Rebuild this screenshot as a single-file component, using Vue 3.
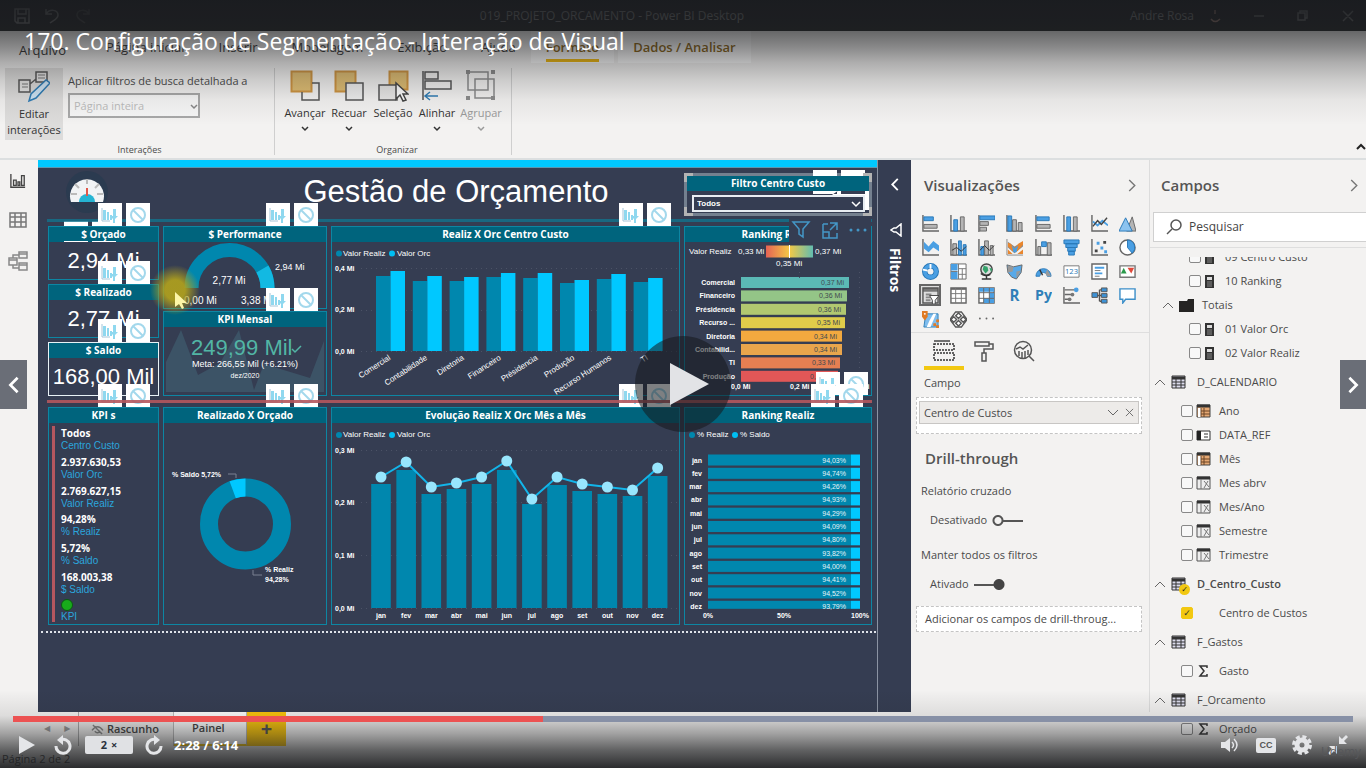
<script setup>
import { ref, computed } from 'vue'

const position = ref(39.55)
const trackStyle = computed(() => ({
  background: `linear-gradient(to right, #ec5252 ${position.value}%, #8790a6 ${position.value}%)`,
}))

const ribbonTabs = ['Página inicial', 'Inserir', 'Modelagem', 'Exibição', 'Ajuda']

const arrange = [
  { label: 'Avançar', art: '<path d="M1.500 1.500h20v20h-20z" fill="#dfbd72" stroke="#cf9440" stroke-width="2"/><path d="M22 13h7v17H12v-8" fill="none" stroke="#555" stroke-width="1.500"/>' },
  { label: 'Recuar', art: '<path d="M1.500 1.500h20v20h-20z" fill="#dfbd72" stroke="#cf9440" stroke-width="2"/><path d="M12 13h17v17H12z" fill="#eee" stroke="#555" stroke-width="1.500"/>' },
  { label: 'Seleção', flat: true, art: '<path d="M11.500 1.500h18v18h-18z" fill="#dfbd72" stroke="#cf9440" stroke-width="2"/><path d="M1 15h18v15H1z" fill="#e8e7e6" stroke="#555" stroke-width="1.500"/><path d="M18 13v16l4-4 3 6 3-1-3-6h5z" fill="#fff" stroke="#444" stroke-width="1.500"/>' },
  { label: 'Alinhar', art: '<path d="M1 1v29M3 2h13v7H3zM3 11h26v8H3z" fill="none" stroke="#555" stroke-width="1.500"/><path d="M4 26h12M8 22l-5 4 5 4" fill="none" stroke="#2f7cb4" stroke-width="1.500"/>' },
  { label: 'Agrupar', off: true, art: '<path d="M2 2h20v18H2zM9 9h19v19H9z" fill="none" stroke="#8c8c8c" stroke-width="1.500"/><path d="M0 0h4v4H0zM25 0h4v4h-4zM0 26h4v4H0zM25 26h4v4h-4z" fill="#8c8c8c"/>' },
]

const totals = [
  { title: '$ Orçado', value: '2,94 Mi' },
  { title: '$ Realizado', value: '2,77 Mi' },
  { title: '$ Saldo', value: '168,00 Mil', active: true },
]

const kpis = [
  ['Todos', 'Centro Custo'],
  ['2.937.630,53', 'Valor Orc'],
  ['2.769.627,15', 'Valor Realiz'],
  ['94,28%', '% Realiz'],
  ['5,72%', '% Saldo'],
  ['168.003,38', '$ Saldo'],
]

const centers = [
  ['Comercial', 276, 271], ['Contabilidade', 281, 276], ['Diretoria', 281, 277], ['Financeiro', 277, 273],
  ['Présidencia', 278, 273], ['Produção', 283, 280], ['Recurso Humanos', 279, 274], ['TI', 282, 278],
].map(([name, real, orc], i) => ({ name, real, orc, x: 376 + i * 36.8 }))

const months = ['jan', 'fev', 'mar', 'abr', 'mai', 'jun', 'jul', 'ago', 'set', 'out', 'nov', 'dez']
const barTops = [484, 470, 494, 489, 484, 470, 504, 485, 491, 494, 496, 476]
const dotTops = [477, 462, 487, 483, 477, 461, 499, 477, 484, 487, 490, 468]
const shares = ['94,03%', '94,74%', '94,26%', '94,93%', '94,29%', '94,09%', '94,80%', '93,82%', '94,00%', '94,41%', '94,52%', '93,79%']
const monthly = months.map((name, i) => ({ name, bar: barTops[i], dot: dotTops[i], cx: 381 + i * 25.15, share: shares[i], y: 454.5 + i * 13.3 }))
const line = monthly.map((m) => `${m.cx},${m.dot}`).join(' ')

const ranking = [
  ['Comercial', '0,37 Mi', 108, '#5bb9b6'], ['Financeiro', '0,36 Mi', 106, '#94c587'],
  ['Présidencia', '0,36 Mi', 105, '#b2c870'], ['Recurso ...', '0,35 Mi', 104, '#e0cc4a'],
  ['Diretoria', '0,34 Mi', 101, '#f2a93f'], ['Contabilid...', '0,34 Mi', 101, '#e9a54c'],
  ['TI', '0,33 Mi', 99, '#e67f52'], ['Produção', '0,33 Mi', 97, '#e25757'],
].map(([name, value, w, color], i) => ({ name, value, w, color, y: 277 + i * 13.4 }))

const ax = '<path d="M1 0v17h17" fill="none" stroke="#666" stroke-width="1.500"/>'
const gr = 'fill="#b5b5b5" stroke="#666"'
const bl = 'fill="#4a9fe3" stroke="#2878b8"'
const vizIcons = [
  ax + `<path d="M2 2h10v4H2z" ${bl}/><path d="M2 10h14v4H2z" ${gr}/>`,
  ax + `<path d="M4 5h4v12H4z" ${bl}/><path d="M11 2h4v15h-4z" ${gr}/>`,
  `<path d="M1 0v18" stroke="#666" stroke-width="1.500"/><path d="M2 1h16v4H2z" ${bl}/><path d="M2 7h9v4H2zM2 13h7v4H2z" ${gr}/>`,
  ax + `<path d="M2 1h4v16H2z" ${bl}/><path d="M7 5h4v12H7zM13 8h4v9h-4z" ${gr}/>`,
  ax + `<path d="M2 2h13v4H2z" ${bl}/><path d="M2 10h14v4H2z" ${gr}/>`,
  ax + `<path d="M4 2h4v15H4z" ${bl}/><path d="M11 2h4v15h-4z" ${gr}/>`,
  ax + '<path d="M2 7l5 4 5-5 6 5" fill="none" stroke="#4a9fe3" stroke-width="2"/><path d="M2 12l5-6 4 4 6-7" fill="none" stroke="#444" stroke-width="1.500"/>',
  `<path d="M8 17l6-15 4 15z" ${gr}/><path d="M0 17L7 3l7 14z" fill="#8cc3ef" stroke="#2878b8"/>`,
  ax + '<path d="M2 3l5 5 5-6 6 5v6l-6-4-5 5-5-4z" fill="#4a9fe3"/>',
  ax + `<path d="M3 5h4v12H3z" ${gr}/><path d="M9 2h3v15H9zM14 6h3v11h-3z" ${bl}/><path d="M2 12l5-3 5 4 5-5" fill="none" stroke="#333"/>`,
  ax + `<path d="M3 8h3v9H3z" ${bl}/><path d="M7 2h4v15H7zM13 7h3v10h-3z" ${gr}/><path d="M2 12l5-5 5 5 5-5" fill="none" stroke="#333"/>`,
  '<path d="M1 0v17h17" fill="none" stroke="#888"/><path d="M2 11l5 5H2zM12 16l6-5v5z" fill="#e8862e"/><path d="M2 3l7 5 9-5v5l-9 7-7-6z" fill="#8b8b8b"/><path d="M2 4l3 1 4 5 4-5 5-3v4l-6 7H7L2 8z" fill="#e8862e"/><path d="M6 7l3 3 4-3-2 7H8z" fill="#4a9fe3"/>',
  ax + `<path d="M3 8h3v9H3zM13 4h4v13h-4z" ${gr}/><path d="M7 3h5v5H7z" ${bl}/>`,
  `<path d="M1 1h16v4H1zM3 5h12v4H3zM5 9h8v4H5zM6 13h6v4H6z" ${bl}/>`,
  ax + '<g fill="#444"><path d="M13 2h3v3h-3zM4 11h3v3H4z"/></g><g fill="#4a9fe3"><path d="M6 3h3v3H6zM10 8h3v3h-3zM14 12h3v3h-3z"/></g>',
  '<circle cx="9" cy="9" r="8" fill="#fff" stroke="#666" stroke-width="1.500"/><path d="M9 1a8 8 0 0 1 5 14L9 9z" fill="#4a9fe3" stroke="#2878b8"/>',
  '<circle cx="9" cy="9" r="6" fill="none" stroke="#2878b8" stroke-width="6"/><circle cx="9" cy="9" r="6" fill="none" stroke="#4a9fe3" stroke-width="4"/><circle cx="9" cy="9" r="3" fill="#f3f2f1"/><path d="M9 1v5M1 7l5 1" stroke="#fff" stroke-width="2"/>',
  '<path d="M1 1h16v16H1z" fill="#fff" stroke="#666"/><path d="M1 1h7v7H1zM1 9h7v8H1z" fill="#4a9fe3"/><path d="M9 1v16M9 6h8M13 6v11M1 9h7M9 12h8" stroke="#777" fill="none"/>',
  '<circle cx="9" cy="7" r="6" fill="#ddd" stroke="#444" stroke-width="1.500"/><path d="M6 3l4 1 1 4-3 3-3-4zM12 5l3 1-1 4z" fill="#34a36b"/><path d="M4 17h10M9 13v4M3 11a8 8 0 0 0 10 1" fill="none" stroke="#333" stroke-width="1.500"/>',
  '<path d="M1 2l7 2 9-2-1 8-5 7-5-2-4-5z" fill="#58a9e8" stroke="#666"/><path d="M2 3l6 1-1 5-5 1zM11 9l5-1-5 8z" fill="#999"/>',
  '<path d="M1 14a8 8 0 0 1 16 0h-4a4 4 0 0 0-8 0z" fill="#4a9fe3" stroke="#2878b8"/><path d="M8 13l-3-6" stroke="#333" stroke-width="1.500"/><path d="M13 7l4 7h-4l-2-3z" fill="#999"/>',
  '<path d="M1 3h16v12H1z" fill="#fff" stroke="#777"/><text x="9" y="12" text-anchor="middle" font-size="8" fill="#2878b8">123</text>',
  '<path d="M1 1h16v16H1z" fill="#fff" stroke="#666" stroke-width="1.500"/><path d="M4 5h10M4 11h8" stroke="#4a9fe3" stroke-width="2"/><path d="M4 8h6M4 14h5" stroke="#777"/>',
  '<path d="M1 3h16v12H1z" fill="#fff" stroke="#777" stroke-width="1.500"/><path d="M2 11l3-6 3 6z" fill="#2a9a4b"/><path d="M9 5h7l-3 6z" fill="#e0493a"/>',
  '<path d="M1 1h16v4H1z" fill="#777"/><path d="M1 1h16v16H1z" fill="none" stroke="#555" stroke-width="1.500"/><path d="M4 8h6M4 11h5M4 14h5" stroke="#888" stroke-width="2"/><path d="M8 9h10l-4 5v4h-3v-4z" fill="#fff" stroke="#444"/>',
  '<path d="M1 1h16v16H1z" fill="#fff" stroke="#666" stroke-width="1.500"/><path d="M1 2h16" stroke="#666" stroke-width="2"/><path d="M6 1v16M12 1v16M1 7h16M1 12h16" stroke="#777"/>',
  '<path d="M1 1h16v16H1z" fill="#fff" stroke="#666" stroke-width="1.500"/><path d="M1 1h16v4H1zM12 6h5v6h-5zM6 12h11v5H6z" fill="#4a9fe3"/><path d="M6 1v16M12 1v16M1 6h16M1 12h16" stroke="#666"/>',
  '<text x="9" y="15" text-anchor="middle" font-size="16" font-weight="700" fill="#2f7fb8">R</text>',
  '<text x="9" y="14" text-anchor="middle" font-size="15" font-weight="700" fill="#2f7fb8">Py</text>',
  '<path d="M1 0v17h17M2 3h10M2 8h7M2 13h4" fill="none" stroke="#666" stroke-width="1.500"/><circle cx="14" cy="3" r="2.500" fill="#4a9fe3"/><circle cx="10" cy="8" r="2" fill="#777"/><circle cx="7" cy="13" r="2" fill="#777"/>',
  '<path d="M6 9h5M9 3v12M9 3h3M9 15h3" stroke="#555" fill="none" stroke-width="1.500"/><path d="M1 6h6v5H1zM11 1h6v4h-6zM11 7h6v4h-6zM11 13h6v4h-6z" fill="#3d92d6" stroke="#555"/>',
  '<path d="M1 2h16v11H7l-3 4v-4H1z" fill="#fff" stroke="#3d8fc9" stroke-width="1.500"/>',
  '<path d="M4 3h13v14H2z" fill="#7fbdee" stroke="#2f7fb8"/><path d="M12 3l3 0-6 14H5l3-7z" fill="#fff"/><path d="M0 0h6v6l-3 4-3-4z" fill="#e07b25"/><circle cx="3" cy="3" r="1" fill="#fff"/><path d="M12 13h3v3h-3zM15 9h3v3h-3zM15 15h3v3h-3z" fill="#e07b25"/>',
  '<path d="M6 1h6l6 8-6 8H6L0 9z" fill="#fff" stroke="#555" stroke-width="1.500"/><path d="M9 2l3 3-3 3-3-3zM4 6l3 3-3 3-3-3zM14 6l3 3-3 3-3-3zM9 10l3 3-3 3-3-3z" fill="#fff" stroke="#555" stroke-width="1.500"/>',
  '<g fill="#666"><circle cx="2" cy="8" r="1"/><circle cx="9" cy="8" r="1"/><circle cx="16" cy="8" r="1"/></g>',
]

const glyphs = {
  calc: '<path d="M3 1h9v13H3z" fill="#333"/><path d="M5 3h5v3H5z" fill="#ddd"/><path d="M5 8h5M5 10h5M5 12h5" stroke="#888"/>',
  folder: '<path d="M0 3h8l1-2h6v13H0z" fill="#252423"/>',
  table: '<path d="M1 1h13v12H1z" fill="#dde" stroke="#333"/><path d="M1 3h13" stroke="#333" stroke-width="3"/><path d="M5 2v11M10 2v11M1 7h13M1 10h13" stroke="#333"/>',
  hier: '<path d="M1 1h13v12H1z" fill="#e5a873" stroke="#444"/><path d="M1 2h13" stroke="#333" stroke-width="3"/><path d="M2 4h3v9H2z" fill="#fff"/><path d="M5 4v9M8 4v9M5 7h9M5 10h9" stroke="#6b4526"/>',
  card: '<path d="M1 3h13v9H1z" fill="#fff" stroke="#333"/><path d="M1 3h4v9H1z" fill="#222"/><path d="M8 6h4M8 9h4" stroke="#333"/>',
  text: '<path d="M1 1h13v12H1z" fill="#eee" stroke="#555"/><path d="M1 2h13" stroke="#333" stroke-width="3"/><path d="M5 3v10M8 5l5 6M12 5l-4 7" stroke="#777"/>',
  sum: '<path d="M11 4V2H4l4 5-4 5h7v-2" fill="none" stroke="#333" stroke-width="1.500"/>',
}
const tree = [
  { k: 'calc', t: '09 Centro Custo', lvl: 'measure' },
  { k: 'calc', t: '10 Ranking', lvl: 'measure' },
  { k: 'folder', t: 'Totais', lvl: 'folder' },
  { k: 'calc', t: '01 Valor Orc', lvl: 'measure' },
  { k: 'calc', t: '02 Valor Realiz', lvl: 'measure' },
  { k: 'table', t: 'D_CALENDARIO', lvl: 'table' },
  { k: 'hier', t: 'Ano', lvl: 'field' },
  { k: 'card', t: 'DATA_REF', lvl: 'field' },
  { k: 'hier', t: 'Mês', lvl: 'field' },
  { k: 'text', t: 'Mes abrv', lvl: 'field' },
  { k: 'text', t: 'Mes/Ano', lvl: 'field' },
  { k: 'text', t: 'Semestre', lvl: 'field' },
  { k: 'text', t: 'Trimestre', lvl: 'field' },
  { k: 'table', t: 'D_Centro_Custo', lvl: 'table', used: true },
  { k: '', t: 'Centro de Custos', lvl: 'field', on: true },
  { k: 'table', t: 'F_Gastos', lvl: 'table' },
  { k: 'sum', t: 'Gasto', lvl: 'field' },
  { k: 'table', t: 'F_Orcamento', lvl: 'table' },
  { k: 'sum', t: 'Orçado', lvl: 'field' },
]

const badgeArt = '<path d="M0 0h24v23H0z" fill="#fff"/><g fill="#8fd8ef"><path d="M5 7h3v10H5zM9 9h2v8H9zM12 12h2v5h-2zM15 6h3v7h-3zM12 13h8l-3 3v4h-2v-4z"/></g><path d="M4 5v13h8" fill="none" stroke="#a5c5d8"/><path d="M28 0h24v23H28z" fill="#fff"/><circle cx="40" cy="12" r="7" fill="none" stroke="#a3d8ec" stroke-width="2"/><path d="M35 7l10 10" stroke="#a3d8ec" stroke-width="2"/>'
</script>

<template>
  <div class="stage">
    <header class="titlebar">
      <svg class="quick" viewBox="0 0 80 16" aria-hidden="true">
        <path d="M1 1h14v14H3l-2-2zM4 1v5h8V1M4 15v-5h7v5M32 1v5h6M32 6c4-6 12-4 12 1 0 4-4 5-8 8" />
        <path class="dim" d="M75 1v5h-6M75 6c-4-6-12-4-12 1 0 4 4 5 8 8" />
      </svg>
      <span class="doc">019_PROJETO_ORCAMENTO - Power BI Desktop</span>
      <span class="user">Andre Rosa</span>
      <svg class="win" viewBox="0 0 160 16" aria-hidden="true">
        <path class="face" d="M9 11q4 5 9 0M13 2v4" />
        <path d="M52 8h10M96 5h7v7h-7zM98 5V3h7v7h-2M141 3l10 10M151 3l-10 10" />
      </svg>
    </header>

    <nav class="tabs" aria-label="Faixa de opções">
      <a href="#" class="file">Arquivo</a>
      <a v-for="t in ribbonTabs" :key="t" href="#">{{ t }}</a>
      <a href="#" class="ctx current">Formato</a>
      <a href="#" class="ctx">Dados / Analisar</a>
    </nav>

    <section class="ribbon">
      <div class="group first">
        <div class="tools">
          <button class="edit">
            <svg viewBox="0 0 32 32" width="32" height="32" aria-hidden="true">
              <path d="M18 1h11v10H18zM1 9h11v12H1zM12 13l6-5" fill="#e4e3e2" stroke="#555" stroke-width="1.500" />
              <path d="M20 4h7M20 7h7M4 13h6M4 16h6" stroke="#777" />
              <path d="M11 30l2-7L28 9l4 3-14 15z" fill="#cfe5f5" stroke="#2f7cb4" stroke-width="1.500" />
            </svg>
            Editar<br>interações
          </button>
          <div class="apply">
            <label for="drill">Aplicar filtros de busca detalhada a</label>
            <span class="pick">
              <select id="drill" disabled><option>Página inteira</option></select>
              <svg viewBox="0 0 8 6" width="8" height="6" aria-hidden="true"><path d="M1 1l3 3 3-3" fill="none" stroke="#888" stroke-width="1.500" /></svg>
            </span>
          </div>
        </div>
        <span class="caption">Interações</span>
      </div>
      <div class="group second">
        <div class="tools">
          <button v-for="a in arrange" :key="a.label" class="tool" :class="{ off: a.off }">
            <svg viewBox="0 0 31 32" width="31" height="32" aria-hidden="true" v-html="a.art" />
            {{ a.label }}
            <svg v-if="!a.flat" class="caret" viewBox="0 0 8 6" width="8" height="6" aria-hidden="true"><path d="M1 1l3 3 3-3" fill="none" stroke="currentColor" stroke-width="1.500" /></svg>
          </button>
        </div>
        <span class="caption">Organizar</span>
      </div>
      <button class="collapse" aria-label="Recolher"><svg viewBox="0 0 10 8" width="10" height="8"><path d="M1 6l4-4 4 4" fill="none" stroke="#222" stroke-width="2" /></svg></button>
    </section>

    <main class="work">
      <nav class="rail" aria-label="Modos">
        <button aria-label="Relatório"><svg viewBox="0 0 18 16" width="16" height="16"><path d="M1 0v15h16M4 7h3v6H4zM9 9h2v4H9zM13 2h3v11h-3z" fill="none" stroke="#444" stroke-width="1.500" /></svg></button>
        <button aria-label="Dados"><svg viewBox="0 0 18 16" width="18" height="16"><path d="M1 1h16v14H1zM1 5h16M1 10h16M6 1v14M12 1v14" fill="none" stroke="#777" stroke-width="1.500" /></svg></button>
        <button aria-label="Modelo"><svg viewBox="0 0 20 20" width="20" height="20"><path d="M1 7h8v7H1zM11 1h8v6h-8zM11 12h8v7h-8zM1 9h8M11 3h8M11 14h8M5 7V4h6M5 14v3h6" fill="none" stroke="#888" stroke-width="1.500" /></svg></button>
      </nav>

      <article class="canvas">
        <div class="strip"></div>
        <div class="head">
          <svg class="logo" viewBox="0 0 44 48" aria-hidden="true">
            <circle cx="22" cy="22" r="21" fill="#2b3b50" />
            <path d="M6 32a17 17 0 1 1 32 0z" fill="#f1f3f5" />
            <path d="M14 32a8 8 0 0 1 16 0z" fill="#25b4d3" />
            <path d="M22 9v5M10 14l4 4M34 14l-4 4M6 24h6M32 24h6" stroke="#bbb" stroke-width="2" />
            <path d="M22 18v8" stroke="#e0574a" stroke-width="2" />
          </svg>
          <h1>Gestão de Orçamento</h1>
          <div class="slicer">
            <svg class="under" viewBox="0 0 60 52" aria-hidden="true"><path d="M4 0h24v24H4zM32 0h24v24H32zM1 40h59V16H36z" fill="#fff" /></svg>
            <label class="bar" for="centro">Filtro Centro Custo</label>
            <span class="choice">
              <select id="centro"><option>Todos</option></select>
              <svg viewBox="0 0 10 8" width="10" height="8" aria-hidden="true"><path d="M1 1l4 4 4-4" fill="none" stroke="#fff" stroke-width="1.500" /></svg>
            </span>
            <i class="grip a"></i><i class="grip b"></i><i class="grip c"></i><i class="grip d"></i>
          </div>
        </div>
        <div class="rule teal"></div>

        <div class="board top">
          <div class="stack">
            <section v-for="c in totals" :key="c.title" class="card" :class="{ active: c.active }">
              <svg class="badges" viewBox="0 0 52 23" aria-hidden="true" v-html="badgeArt" />
              <h2>{{ c.title }}</h2>
              <p class="big">{{ c.value }}</p>
            </section>
            <svg class="traces" viewBox="0 0 52 22" aria-hidden="true"><path d="M0 0h24v5H0zM28 0h24v5H28zM0 20h24v1H0zM28 20h24v1H28z" fill="#fff" /></svg>
          </div>
          <div class="stack tight">
            <section class="card">
              <svg class="badges" viewBox="0 0 52 23" aria-hidden="true" v-html="badgeArt" />
              <h2>$ Performance</h2>
              <svg class="chart" viewBox="164 242 162 66">
                <path d="M191.500 288a38 38 0 0 1 76 0" fill="none" stroke="#0087ae" stroke-width="14" />
                <path d="M262.400 269a38 38 0 0 1 5.100 19" fill="none" stroke="#12b9e2" stroke-width="14" />
                <g fill="#fff" font-size="10">
                  <text x="229" y="284" text-anchor="middle">2,77 Mi</text>
                  <text x="275" y="270" font-size="9">2,94 Mi</text>
                  <text x="184" y="304">0,00 Mi</text>
                  <text x="241" y="304">3,38 Mi</text>
                </g>
              </svg>
            </section>
            <section class="card">
              <svg class="badges" viewBox="0 0 52 23" aria-hidden="true" v-html="badgeArt" />
              <h2>KPI Mensal</h2>
              <svg class="chart" viewBox="164 327 162 68">
                <path d="M166 392v-30l15-32 17 45 22-12 19-33 15 60 10-26 46 14 14-37v51z" fill="#3c5366" />
                <text x="191" y="355" font-size="22" fill="#52b5a5">249,99 Mil</text>
                <path d="M292 349l3 3 6-6" fill="none" stroke="#52b5a5" stroke-width="1.500" />
                <g fill="#fff" text-anchor="middle">
                  <text x="245" y="367" font-size="9">Meta: 266,55 Mil (+6.21%)</text>
                  <text x="245" y="378" font-size="7">dez/2020</text>
                </g>
              </svg>
            </section>
          </div>
          <section class="card">
            <svg class="badges" viewBox="0 0 52 23" aria-hidden="true" v-html="badgeArt" />
            <h2>Realiz X Orc Centro Custo</h2>
            <svg class="chart" viewBox="332 242 347 153">
              <circle cx="339" cy="253.500" r="3" fill="#0087ae" /><circle cx="392" cy="253.500" r="3" fill="#00bff3" />
              <g fill="#fff" font-size="8"><text x="343" y="256">Valor Realiz</text><text x="397" y="256">Valor Orc</text></g>
              <path d="M361 268.500h316M361 310.500h316M361 351.500h316" stroke="#4b5266" stroke-dasharray="1 4" />
              <g fill="#fff" font-size="7" font-weight="700"><text x="335" y="271">0,4 Mi</text><text x="335" y="312">0,2 Mi</text><text x="335" y="354">0,0 Mi</text></g>
              <g v-for="c in centers" :key="c.name">
                <rect :x="c.x" :y="c.real" width="14.500" :height="351 - c.real" fill="#0087ae" />
                <rect :x="c.x + 14.500" :y="c.orc" width="14.500" :height="351 - c.orc" fill="#00c8ff" />
                <text :transform="`translate(${c.x + 15} 359) rotate(-33)`" text-anchor="end" font-size="8" fill="#fff">{{ c.name }}</text>
              </g>
            </svg>
          </section>
          <section class="card">
            <h2 class="rank">Ranking Realiz</h2>
            <svg class="actions" viewBox="0 0 82 24" aria-hidden="true">
              <path d="M0 0h82v24H0z" fill="#353d52" />
              <path d="M4 4h16l-6 7v8l-4-3v-5zM34 6h5M34 6v14h14v-5M41 5h7v7M48 5l-7 7M34 14h6v6" fill="none" stroke="#4496c6" stroke-width="1.500" />
              <g fill="#4496c6"><circle cx="62" cy="12" r="1.500" /><circle cx="69" cy="12" r="1.500" /><circle cx="76" cy="12" r="1.500" /></g>
            </svg>
            <svg class="chart" viewBox="685 242 186 153">
              <defs>
                <linearGradient id="heat"><stop offset="0" stop-color="#e66354" /><stop offset=".5" stop-color="#f3c846" /><stop offset="1" stop-color="#62bdb0" /></linearGradient>
              </defs>
              <rect x="766" y="245.500" width="47" height="12" fill="url(#heat)" /><path d="M789.500 245v13" stroke="#fff" />
              <g fill="#fff" font-size="8"><text x="689" y="254">Valor Realiz</text><text x="738" y="254">0,33 Mi</text><text x="815" y="254">0,37 Mi</text><text x="776" y="266">0,35 Mi</text></g>
              <g v-for="r in ranking" :key="r.name">
                <rect x="741" :y="r.y" :width="r.w" height="11" :fill="r.color" />
                <text x="735" :y="r.y + 8" text-anchor="end" font-size="7" font-weight="700" fill="#fff">{{ r.name }}</text>
                <text :x="736 + r.w" :y="r.y + 8" text-anchor="end" font-size="7" fill="#414a50">{{ r.value }}</text>
              </g>
              <path d="M859.500 272v106M799.500 272v6" stroke="#4b5266" stroke-dasharray="1 4" />
              <g fill="#fff" font-size="7" font-weight="700"><text x="731" y="389">0,0 Mi</text><text x="790" y="389">0,2 Mi</text><text x="850" y="389">0,4 Mi</text></g>
            </svg>
            <svg class="badges low" viewBox="0 0 52 23" aria-hidden="true" v-html="badgeArt" />
          </section>
        </div>

        <div class="rule red"></div>

        <div class="board">
          <section class="card">
            <svg class="badges" viewBox="0 0 52 23" aria-hidden="true" v-html="badgeArt" />
            <h2>KPI s</h2>
            <dl class="kpis">
              <div v-for="k in kpis" :key="k[1]"><dd>{{ k[0] }}</dd><dt>{{ k[1] }}</dt></div>
              <div><dd><i class="lamp"></i></dd><dt>KPI</dt></div>
            </dl>
          </section>
          <section class="card">
            <svg class="badges" viewBox="0 0 52 23" aria-hidden="true" v-html="badgeArt" />
            <h2>Realizado X Orçado</h2>
            <svg class="chart" viewBox="164 423 162 201">
              <circle cx="245.500" cy="524" r="36.500" fill="none" stroke="#0087ae" stroke-width="18" />
              <path d="M232.700 489.800a36.500 36.500 0 0 1 12.800-2.300" fill="none" stroke="#00c8ff" stroke-width="18" />
              <path d="M228 474h8v4M253 570v5h9" fill="none" stroke="#7b8191" />
              <g fill="#fff" font-size="7" font-weight="700"><text x="172" y="477">% Saldo 5,72%</text><text x="265" y="572">% Realiz</text><text x="265" y="582">94,28%</text></g>
            </svg>
          </section>
          <section class="card">
            <svg class="badges" viewBox="0 0 52 23" aria-hidden="true" v-html="badgeArt" />
            <h2>Evolução Realiz X Orc Mês a Mês</h2>
            <svg class="chart" viewBox="332 423 347 201">
              <circle cx="339" cy="435" r="3" fill="#0087ae" /><circle cx="392" cy="435" r="3" fill="#00bff3" />
              <g fill="#fff" font-size="8"><text x="343" y="437">Valor Realiz</text><text x="397" y="437">Valor Orc</text></g>
              <path d="M361 450.500h316M361 502.500h316M361 555.500h316M361 608.500h316" stroke="#4b5266" stroke-dasharray="1 4" />
              <g fill="#fff" font-size="7" font-weight="700"><text x="335" y="453">0,3 Mi</text><text x="335" y="505">0,2 Mi</text><text x="335" y="558">0,1 Mi</text><text x="335" y="611">0,0 Mi</text></g>
              <g v-for="m in monthly" :key="m.name">
                <rect :x="m.cx - 9.800" :y="m.bar" width="19.600" :height="608 - m.bar" fill="#0087ae" />
                <text :x="m.cx" y="618" text-anchor="middle" font-size="7" font-weight="700" fill="#fff">{{ m.name }}</text>
              </g>
              <polyline :points="line" fill="none" stroke="#12b5ea" stroke-width="2" />
              <circle v-for="m in monthly" :key="m.name" :cx="m.cx" :cy="m.dot" r="5.500" fill="#98e6fd" />
            </svg>
          </section>
          <section class="card">
            <svg class="badges" viewBox="0 0 52 23" aria-hidden="true" v-html="badgeArt" />
            <h2>Ranking Realiz</h2>
            <svg class="chart" viewBox="685 423 186 201">
              <circle cx="692" cy="435" r="3" fill="#0087ae" /><circle cx="735" cy="435" r="3" fill="#00bff3" />
              <g fill="#fff" font-size="8"><text x="697" y="437">% Realiz</text><text x="740" y="437">% Saldo</text></g>
              <g v-for="m in monthly" :key="m.name">
                <rect x="708" :y="m.y" width="143" :height="m.name === 'dez' ? 8 : 11" fill="#0087ae" />
                <rect x="851" :y="m.y" width="9" :height="m.name === 'dez' ? 8 : 11" fill="#00c8ff" />
                <text x="702" :y="m.y + 8" text-anchor="end" font-size="7" font-weight="700" fill="#fff">{{ m.name }}</text>
                <text x="846" :y="m.y + 8" text-anchor="end" font-size="7" fill="#e6f4f8">{{ m.share }}</text>
              </g>
              <g fill="#fff" font-size="7" font-weight="700" text-anchor="middle"><text x="708" y="618">0%</text><text x="784" y="618">50%</text><text x="860" y="618">100%</text></g>
            </svg>
          </section>
        </div>
        <div class="dots"></div>
        <svg class="pointer" viewBox="0 0 50 50" aria-hidden="true">
          <defs><radialGradient id="halo"><stop offset=".4" stop-color="#b3a31c" stop-opacity=".9" /><stop offset="1" stop-color="#b3a31c" stop-opacity="0" /></radialGradient></defs>
          <circle cx="25" cy="25" r="25" fill="url(#halo)" />
          <path d="M25 27v15l4-3 3 5 2-1-2-5h5z" fill="#fdf6a8" />
        </svg>
      </article>

      <aside class="filters">
        <button aria-label="Expandir"><svg viewBox="0 0 8 14" width="8" height="13"><path d="M7 1L1 7l6 6" fill="none" stroke="#fff" stroke-width="2" /></svg></button>
        <svg viewBox="0 0 12 14" width="12" height="14" aria-hidden="true"><path d="M11 1v12L6 9H4L1 7l3-2h2z" fill="none" stroke="#fff" stroke-width="1.500" /></svg>
        <h2>Filtros</h2>
      </aside>

      <aside class="viz">
        <header class="panehead"><h2>Visualizações</h2><button aria-label="Recolher"><svg viewBox="0 0 8 14" width="8" height="13"><path d="M1 1l6 6-6 6" fill="none" stroke="#777" stroke-width="1.500" /></svg></button></header>
        <div class="gallery">
          <button v-for="(v, i) in vizIcons" :key="i" :class="{ chosen: i === 24 }" :aria-label="`Visual ${i + 1}`"><svg viewBox="0 0 18 18" width="17" height="17" v-html="v" /></button>
        </div>
        <div class="modes">
          <button class="on" aria-label="Campos"><svg viewBox="0 0 22 22" width="22" height="22"><path d="M1 1h16" stroke="#444" stroke-width="1.500" /><path d="M1 4h20v6H1zM1 13h20v7H1z" fill="none" stroke="#333" stroke-width="1.500" stroke-dasharray="2 1" /></svg></button>
          <button aria-label="Formato"><svg viewBox="0 0 22 22" width="22" height="22"><path d="M2 2h14v4H2zM16 4h4v5h-9v4M9 13h4v8H9z" fill="none" stroke="#555" stroke-width="1.500" /></svg></button>
          <button aria-label="Análise"><svg viewBox="0 0 22 22" width="22" height="22"><circle cx="10" cy="10" r="8.500" fill="none" stroke="#555" stroke-width="1.500" /><path d="M3 9l4-2 3 2 5-4M6 11v5M9 12v6M12 11v7M15 10v5M16 16l5 5" fill="none" stroke="#555" stroke-width="1.500" /></svg></button>
        </div>
        <p class="lbl">Campo</p>
        <div class="well">
          <div class="chip">Centro de Custos
            <span><button aria-label="Opções"><svg viewBox="0 0 12 8" width="12" height="8"><path d="M1 1l5 5 5-5" fill="none" stroke="#666" /></svg></button>
              <button aria-label="Remover"><svg viewBox="0 0 10 10" width="9" height="9"><path d="M1 1l8 8M9 1L1 9" fill="none" stroke="#666" /></svg></button></span>
          </div>
        </div>
        <h3>Drill-through</h3>
        <p class="opt">Relatório cruzado</p>
        <label class="switch">Desativado <input type="checkbox"></label>
        <p class="opt">Manter todos os filtros</p>
        <label class="switch">Ativado <input type="checkbox" checked></label>
        <div class="well drop">Adicionar os campos de drill-throug...</div>
      </aside>

      <aside class="fields">
        <header class="panehead"><h2>Campos</h2><button aria-label="Recolher"><svg viewBox="0 0 8 14" width="8" height="13"><path d="M1 1l6 6-6 6" fill="none" stroke="#777" stroke-width="1.500" /></svg></button></header>
        <div class="search">
          <svg viewBox="0 0 16 16" width="16" height="16" aria-hidden="true"><circle cx="10" cy="6" r="5" fill="none" stroke="#555" stroke-width="1.500" /><path d="M6 10l-5 5" stroke="#555" stroke-width="1.500" /></svg>
          <input type="text" placeholder="Pesquisar" aria-label="Pesquisar">
        </div>
        <div class="scroller">
          <ul>
            <li v-for="n in tree" :key="n.t" :class="n.lvl">
              <svg v-if="n.lvl === 'table' || n.lvl === 'folder'" class="fold" viewBox="0 0 12 8" width="12" height="8" aria-hidden="true"><path d="M1 7l5-5 5 5" fill="none" stroke="#666" /></svg>
              <label>
                <input v-if="n.lvl === 'measure' || n.lvl === 'field'" type="checkbox" :checked="n.on">
                <svg class="kind" viewBox="0 0 15 15" width="15" height="15" aria-hidden="true"><g v-html="glyphs[n.k] || ''" /></svg>
                <i v-if="n.used" class="tick">✓</i>
                <span :class="{ strong: n.used }">{{ n.t }}</span>
              </label>
            </li>
          </ul>
        </div>
      </aside>
    </main>

    <footer class="sheets">
      <div class="row">
        <span class="arrows"><i>◀</i><i>▶</i></span>
        <a href="#"><svg viewBox="0 0 14 12" width="13" height="11" aria-hidden="true"><path d="M1 7q6-8 12 0M2 1l10 10M4 8q3 3 6 0" fill="none" stroke="#888" stroke-width="1.500" /></svg>Rascunho</a>
        <a href="#" class="current">Painel</a>
        <button aria-label="Nova página">+</button>
      </div>
      <span class="status">Página 2 de 2</span>
    </footer>

    <div class="shade up"></div>
    <div class="shade down"></div>
    <p class="lecture">170. Configuração de Segmentação - Interação de Visual</p>
    <button class="jump prev" aria-label="Anterior"><svg viewBox="0 0 12 20" width="12" height="18"><path d="M10 2L2 10l8 8" fill="none" stroke="#fff" stroke-width="3" /></svg></button>
    <button class="jump next" aria-label="Próxima"><svg viewBox="0 0 12 20" width="12" height="18"><path d="M2 2l8 8-8 8" fill="none" stroke="#fff" stroke-width="3" /></svg></button>
    <button class="play" aria-label="Reproduzir"><svg viewBox="0 0 96 96"><path d="M35 27v42l39-21z" fill="#e2e3e6" /></svg></button>

    <div class="player">
      <input v-model="position" class="seek" :style="trackStyle" type="range" min="0" max="100" step="any" aria-label="Progresso">
      <div class="controls">
        <button aria-label="Reproduzir"><svg viewBox="0 0 18 20" width="18" height="20"><path d="M1 1v18l16-9z" fill="#e4e5e8" /></svg></button>
        <button aria-label="Voltar"><svg viewBox="0 0 18 20" width="18" height="20"><path d="M6 5a7 7 0 1 1-4 6" fill="none" stroke="#e4e5e8" stroke-width="3" /><path d="M9 0v10L3 5z" fill="#e4e5e8" /></svg></button>
        <button class="speed">2 <small>×</small></button>
        <button aria-label="Avançar"><svg viewBox="0 0 18 20" width="18" height="20"><path d="M12 5a7 7 0 1 0 4 6" fill="none" stroke="#e4e5e8" stroke-width="3" /><path d="M9 0v10l6-5z" fill="#e4e5e8" /></svg></button>
        <span class="time">2:28 / 6:14</span>
        <span class="brand">Udemy</span>
        <button aria-label="Volume"><svg viewBox="0 0 20 18" width="20" height="18"><path d="M1 6h4l5-4v14l-5-4H1z" fill="#e4e5e8" /><path d="M12 6q3 3 0 6M14 3q6 6 0 12" fill="none" stroke="#e4e5e8" stroke-width="1.500" /></svg></button>
        <button class="cc" aria-label="Legendas">CC</button>
        <button aria-label="Configurações"><svg viewBox="0 0 20 20" width="20" height="20"><circle cx="10" cy="10" r="5" fill="none" stroke="#e4e5e8" stroke-width="5" /><circle cx="10" cy="10" r="8.500" fill="none" stroke="#e4e5e8" stroke-width="3" stroke-dasharray="4 2.700" /></svg></button>
        <button aria-label="Sair da tela cheia"><svg viewBox="0 0 20 20" width="20" height="20"><path d="M11 1v8h8l-3-3 4-4-2-2-4 4zM9 19v-8H1l3 3-4 4 2 2 4-4z" fill="#e4e5e8" /></svg></button>
      </div>
    </div>
  </div>
</template>

<style>
body { background: #f3f2f1; }
</style>

<style scoped>
.stage { position: relative; display: flex; flex-direction: column; min-height: 100vh; overflow: hidden; background: #f3f2f1; color: #4a4a4a; font: 11px/16px "Open Sans", "Noto Sans", sans-serif; }
.stage * { box-sizing: border-box; }
h1, h2, h3, p, ul, dl, dd, dt { margin: 0; padding: 0; }
button { border: 0; padding: 0; background: none; font: inherit; color: inherit; }
a { color: inherit; text-decoration: none; }
svg { flex: none; }

.titlebar { display: flex; align-items: center; height: 31px; padding: 0 4px 0 14px; background: #262626; color: #b4b4b4; font-size: 12px; }
.titlebar svg { height: 16px; fill: none; stroke: #909090; stroke-width: 1.5px; }
.titlebar .quick { width: 80px; }
.titlebar .dim { stroke: #505050; }
.titlebar .face { stroke: #d8a898; }
.titlebar .win { width: 160px; margin-left: 8px; }
.doc { flex: 1; text-align: center; }

.tabs { display: flex; align-items: flex-start; height: 32px; padding-left: 19px; font-size: 13px; line-height: 32px; white-space: nowrap; }
.tabs a { margin-right: 34px; color: #333; }
.tabs .file { padding-top: 3px; margin-right: 40px; }
.tabs .ctx { margin: 0 4px 0 0; padding: 0 15px; background: #fdfdfd; color: #8a6414; font-weight: 600; }
.tabs .current { position: relative; margin-left: -19px; }
.tabs .current::after { content: ""; position: absolute; left: 15px; right: 15px; bottom: 1px; height: 3px; background: #f2b90c; }

.ribbon { display: flex; height: 97px; border-bottom: 2px solid #dcdfe0; }
.group { display: flex; flex-direction: column; justify-content: space-between; margin: 5px 0 3px; border-right: 1px solid #cfcfcf; }
.group.first { padding-left: 5px; width: 275px; }
.group.second { padding-left: 8px; width: 237px; }
.tools { display: flex; align-items: flex-start; height: 73px; }
.caption { font-size: 9px; line-height: 10px; text-align: center; }
.edit { width: 58px; height: 72px; background: #dddcdb; text-align: center; color: #333; }
.edit svg { display: block; margin: 0 auto 3px; }
.apply { margin-left: 5px; padding-top: 5px; }
.apply label { display: block; white-space: nowrap; }
.pick, .choice { position: relative; display: block; }
.pick { width: 132px; margin-top: 4px; }
.pick select { display: block; width: 100%; height: 25px; padding: 0 4px; border: 2px solid #a8a8a8; background: #f6f6f6; color: #bcbcbc; opacity: 1; font: inherit; appearance: none; }
.pick svg { position: absolute; right: 2px; top: 11px; }
.tool { display: flex; flex-direction: column; align-items: center; width: 44px; color: #333; }
.tool svg { margin: 2px 0 3px; }
.tool .caret { margin: 5px 0 0; }
.tool.off { color: #9a9a9a; }
.collapse { margin: auto 0 5px auto; width: 10px; height: 14px; }

.work { display: flex; flex: 1; }
.rail { display: flex; flex-direction: column; align-items: center; gap: 23px; width: 38px; padding: 13px 3px 0 0; }
.rail button, .filters button { display: flex; }
.canvas { position: relative; flex: 1; min-width: 0; background: #353d52; font-family: "Liberation Sans", Arial, sans-serif; }
.strip { height: 8px; background: #00c8ff; border-bottom: 1px solid #5b97b0; }
.head { display: grid; grid-template-columns: 111fr 164fr 349fr 188fr; gap: 4px; height: 51px; padding: 5px 5px 0 10px; }
.logo { grid-area: 1 / 1; width: 44px; height: 48px; margin-left: 17px; margin-top: -3px; }
.head h1 { grid-area: 1 / 1 / 2 / 5; padding: 1px 8px 0 0; color: #fff; font-size: 31px; line-height: 36px; font-weight: 400; text-align: center; }
.slicer { position: relative; grid-area: 1 / 4; height: 43px; background: #353d52; border: 3px solid #74808f; }
.slicer .under { position: absolute; right: 0; top: -6px; width: 60px; height: 52px; }
.bar { position: relative; display: block; height: 15px; background: #00647d; color: #fff; font: 700 10px/15px "Open Sans", sans-serif; text-align: center; }
.choice { margin: 4px 4px 0 5px; }
.choice select { display: block; width: 100%; height: 17px; padding: 0 3px; border: 2px solid #e8edf2; background: #353d52; color: #fff; font: 700 8px "Liberation Sans", sans-serif; appearance: none; }
.choice svg { position: absolute; right: 4px; top: 6px; }
.grip { position: absolute; width: 9px; height: 9px; border: 0 solid #b3b3b3; }
.grip.a { left: -3px; top: -3px; border-width: 3px 0 0 3px; }
.grip.b { right: -3px; top: -3px; border-width: 3px 3px 0 0; }
.grip.c { left: -3px; bottom: -3px; border-width: 0 0 3px 3px; }
.grip.d { right: -3px; bottom: -3px; border-width: 0 3px 3px 0; }
.rule { position: relative; z-index: 2; margin: 0 5px 0 9px; height: 3px; }
.rule.teal { background: #13738d; margin-bottom: 4px; opacity: .8; z-index: 1; }
.rule.red { background: #b4565d; margin: 4px 5px 4px 9px; opacity: .9; }
.board { display: grid; grid-template-columns: 111fr 164fr 349fr 188fr; gap: 4px; padding: 0 5px 0 10px; }
.stack { position: relative; display: flex; flex-direction: column; gap: 4px; }
.stack.tight { gap: 2px; }
.stack .card { flex: 1 1 auto; }
.traces { position: absolute; left: 16px; top: -5px; width: 52px; height: 22px; }
.card { position: relative; border: 1px solid #0d86a3; background: #353d52; }
.card.active { border-color: #e8f2f6; }
.card h2 { height: 15px; overflow: hidden; background: #00647d; color: #fff; font: 700 10px/15px "Open Sans", sans-serif; text-align: center; }
.badges { position: absolute; right: 8px; top: -24px; width: 52px; height: 23px; z-index: 1; }
.badges.low { right: 3px; top: auto; bottom: 0; }
.actions { position: absolute; right: 0; top: -9px; width: 82px; height: 24px; z-index: 1; }
.big { color: #fff; font-size: 22px; line-height: 37px; text-align: center; white-space: nowrap; }
.chart { display: block; width: 100%; }
.kpis { display: flex; flex-direction: column; justify-content: space-between; height: 196px; margin: 3px 0 0 3px; padding-left: 6px; border-left: 3px solid #b5575f; font-size: 10px; line-height: 11px; color: #2ba6dd; }
.kpis dd { color: #fff; font: 700 10px/14px "Open Sans", sans-serif; }
.lamp { display: block; width: 12px; height: 12px; border: 1px solid #0a5a12; border-radius: 50%; background: #18aa1b; }
.dots { margin: 6px 1px 0 3px; border-top: 2px dotted #dfe3ea; }
.pointer { position: absolute; left: 112px; top: 105px; width: 50px; height: 50px; z-index: 2; }

.filters { display: flex; flex-direction: column; align-items: center; width: 34px; padding-top: 18px; border-left: 1px solid #8b93a3; background: #353d52; color: #fff; }
.filters svg { margin-bottom: 32px; }
.filters > svg { margin: 0 0 11px 2px; }
.filters h2 { writing-mode: vertical-rl; font-size: 14px; line-height: 18px; font-weight: 700; }

.viz { width: 238px; }
.fields { width: 217px; border-left: 1px solid #dcdcdc; }
.panehead { display: flex; align-items: center; justify-content: space-between; height: 50px; padding: 0 13px; }
.fields .panehead { padding: 0 8px 0 11px; }
.panehead h2, .viz h3 { font-size: 15px; line-height: 20px; font-weight: 600; color: #555; }
.panehead button { display: flex; }
.gallery { display: grid; grid-template-columns: repeat(8, 1fr); grid-auto-rows: 24px; padding: 1px 7px 0 5px; height: 123px; border-bottom: 1px solid #dedede; }
.gallery button { display: flex; align-items: center; justify-content: center; }
.gallery .chosen { width: 22px; height: 22px; align-self: center; justify-self: center; border: 2px solid #666; background: #dedede; }
.modes { display: flex; padding-left: 13px; height: 37px; }
.modes button { width: 40px; padding: 7px 9px 6px; border-bottom: 4px solid transparent; }
.modes .on { border-color: #f2c811; }
.lbl { padding: 5px 13px 6px; }
.well { margin: 0 7px 0 5px; padding: 3px 2px 9px; border: 1px dashed #c4c4c4; background: #fff; }
.chip { display: flex; align-items: center; justify-content: space-between; height: 23px; padding: 0 4px; border: 1px solid #c8c6c4; background: #edebe9; }
.chip span { display: flex; gap: 6px; }
.chip button { display: flex; align-items: center; }
.viz h3 { padding: 14px 14px 0; }
.opt { padding: 15px 10px 0; }
.switch { display: flex; align-items: center; gap: 5px; padding: 13px 0 4px 19px; }
.switch input { appearance: none; width: 31px; height: 11px; margin: 0; background: radial-gradient(circle at 6px 50%, #f3f2f1 3px, #555 4px, #555 5px, transparent 6px), linear-gradient(#555, #555) 10px 5px / 21px 2px no-repeat; }
.switch input:checked { background: radial-gradient(circle at 25px 50%, #444 5px, transparent 6px), linear-gradient(#555, #555) 0 5px / 21px 2px no-repeat; }
.well.drop { margin-top: 10px; padding: 4px 8px; white-space: nowrap; }

.search { display: flex; align-items: center; gap: 7px; height: 30px; margin: 2px 0 5px 3px; padding-left: 12px; border: 1px solid #d0d0d0; border-right: 0; background: #fff; }
.search input { flex: 1; min-width: 0; border: 0; padding: 0; background: none; font: inherit; font-size: 12px; outline: none; }
.search input::placeholder { color: #444; opacity: 1; }
.scroller { height: 464px; padding-top: 9px; border-top: 1px solid #dedede; }
.scroller ul { list-style: none; overflow: hidden; height: 490px; display: flex; flex-direction: column; }
.scroller li { position: relative; display: flex; align-items: center; flex: none; height: 24px; }
.scroller li:first-child { margin-top: -12px; }
.scroller li.table { height: 34px; padding-left: 4px; }
.scroller li.folder { padding-left: 12px; }
.scroller li.measure { padding-left: 39px; }
.scroller li.field { padding-left: 31px; }
.scroller label { position: relative; display: flex; align-items: center; }
.fold { margin-right: 5px; }
.table .kind { margin-right: 11px; }
.folder .kind { margin-right: 8px; }
.measure .kind { margin: 0 8px 0 1px; }
.field .kind { margin: 0 8px 0 3px; }
.scroller input { appearance: none; width: 12px; height: 12px; margin: 0; border: 1px solid #888; border-radius: 2px; background: #f8f8f8; }
.scroller input:checked { border-color: #f2c811; background: #f2c811; }
.scroller input:checked::after { content: "✓"; display: block; color: #333; font: 700 9px/10px "DejaVu Sans", sans-serif; text-align: center; }
.strong { font-weight: 600; }
.tick { position: absolute; left: 8px; top: 8px; width: 11px; height: 11px; border-radius: 50%; background: #f2c811; color: #222; font: 700 8px/11px "DejaVu Sans", sans-serif; text-align: center; }

.sheets { height: 56px; color: #444; }
.sheets .row { display: flex; align-items: stretch; width: max-content; height: 34px; padding-left: 38px; line-height: 34px; }
.arrows { display: flex; gap: 14px; width: 41px; padding-left: 6px; border-right: 1px solid #aaa; font: 8px/34px "DejaVu Sans", sans-serif; color: #999; }
.arrows i { font-style: normal; }
.sheets a { display: flex; align-items: center; gap: 3px; width: 95px; padding-left: 12px; border-right: 1px solid #bbb; font-weight: 600; }
.sheets a.current { width: 73px; padding-left: 18px; background: #fff; border-bottom: 2px solid #f2c811; }
.sheets button { width: 39px; background: #fcc60a; color: #555; font: 700 20px/34px "Open Sans", sans-serif; }
.status { display: block; padding: 5px 2px; line-height: 16px; }

.shade { position: absolute; left: 0; right: 0; z-index: 4; pointer-events: none; }
.shade.up { top: 0; height: 125px; background: linear-gradient(rgba(26,27,31,.88) 0, rgba(28,29,31,.65) 25%, rgba(28,29,31,.49) 38%, rgba(28,29,31,.32) 50%, rgba(28,29,31,.18) 64%, rgba(28,29,31,.06) 80%, transparent); }
.shade.up::before { content: ""; position: absolute; inset: 0 0 auto; height: 31px; background: rgba(28,30,33,.3); }
.shade.down { bottom: 0; height: 78px; background: linear-gradient(transparent, rgba(28,29,31,.1) 33%, rgba(28,29,31,.38) 56%, rgba(28,29,31,.68) 77%, rgba(28,29,31,.93)); }
.lecture { position: absolute; left: 24px; top: 26px; z-index: 5; color: #fff; font-size: 23px; line-height: 30px; white-space: nowrap; }
.jump { position: absolute; top: calc(50% - 24px); z-index: 5; display: flex; align-items: center; justify-content: center; width: 27px; height: 49px; background: #6a6e77; }
.prev { left: 0; }
.next { right: 0; width: 26px; }
.play { position: absolute; z-index: 5; top: calc(50% - 48px); left: calc(50% - 48px); width: 96px; height: 96px; border-radius: 50%; background: rgba(20,23,28,.55); }
.player { position: absolute; z-index: 5; left: 13px; right: 13px; bottom: 10px; }
.seek { display: block; appearance: none; width: 100%; height: 6px; margin: 0; }
.seek::-webkit-slider-thumb { appearance: none; width: 0; height: 0; }
.controls { display: flex; align-items: center; height: 26px; margin-top: 10px; padding: 0 5px; }
.controls button { display: flex; align-items: center; justify-content: center; margin-right: 18px; }
.controls .speed { width: 48px; height: 18px; margin: 0 12px 0 -5px; border-radius: 2px; background: #e0e1e4; color: #29303b; font-weight: 700; gap: 4px; }
.speed small { font-size: 11px; }
.controls .speed + button { margin-right: 11px; }
.controls .brand ~ button { margin-right: 16px; }
.time { margin-right: auto; color: #fff; font-size: 13px; font-weight: 700; }
.brand { position: absolute; right: -8px; bottom: -2px; color: #56575a; font-size: 12px; line-height: 16px; }
.controls .cc { width: 20px; height: 15px; border-radius: 2px; background: #e4e5e8; color: #555; font: 700 9px/15px "Liberation Sans", sans-serif; }
.controls .brand ~ button:last-child { margin-right: 0; }
</style>
